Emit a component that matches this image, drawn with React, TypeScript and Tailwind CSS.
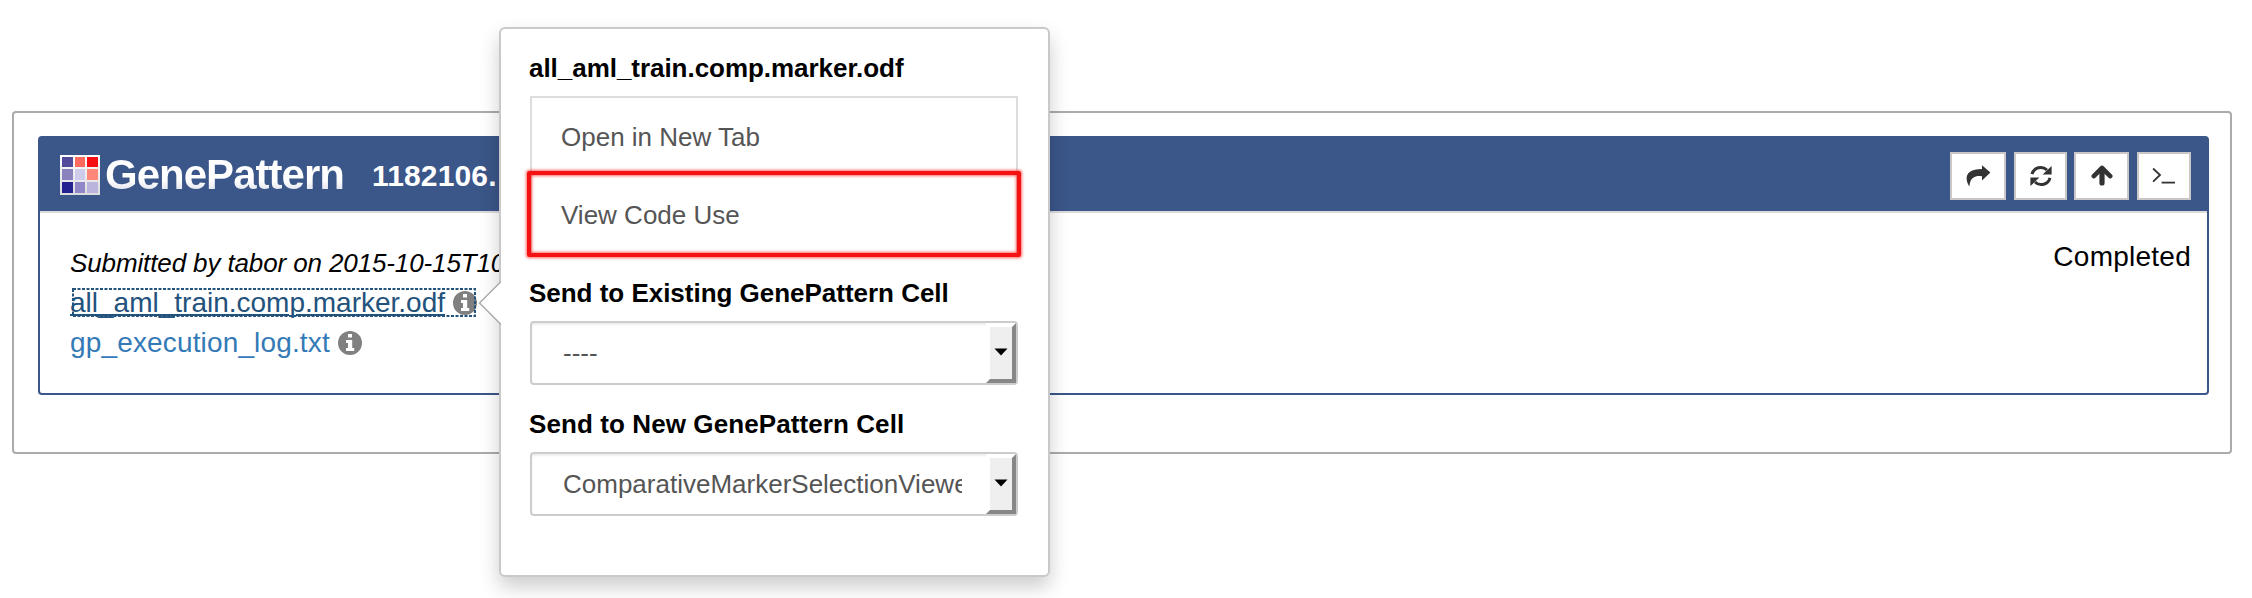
import React from "react";

const logoCells = [
  "bg-[#524a9b]", "bg-[#ff6a5e]", "bg-[#f50f14]",
  "bg-[#8a82bd]", "bg-[#cfcbea]", "bg-[#ff8779]",
  "bg-[#242191]", "bg-[#8f87c8]", "bg-[#bbb5dd]",
];

function Logo() {
  return (
    <div className="flex items-center">
      <div className="grid size-10 grid-cols-3 grid-rows-3 gap-[2px] bg-linear-to-b from-white to-[#dcdcdc] p-[2px]">
        {logoCells.map((c, i) => (
          <span key={i} className={c} />
        ))}
      </div>
      <span className="ml-[5px] bg-linear-to-b from-white from-60% to-[#dcdfe8] to-85% bg-clip-text text-[42px] leading-[52px] font-bold tracking-[-0.98px] text-transparent">
        GenePattern
      </span>
    </div>
  );
}

function IconButton({ className, children }: { className: string; children: React.ReactNode }) {
  return (
    <button className={"flex h-12 items-center justify-center border-2 border-[#cbc6c8] bg-white text-[#333] " + className}>
      {children}
    </button>
  );
}

function ShareIcon() {
  return (
    <svg width="26" height="24" viewBox="0 0 26 24" fill="currentColor">
      <path d="M17 1.2 L25.4 8.6 L17 16.6 V12.2 C10 11.6 5 13.4 4.4 22.6 C-1 14 0.6 5 17 5 Z" />
    </svg>
  );
}

function RefreshIcon() {
  return (
    <svg width="22" height="22" viewBox="0 0 22 22">
      <path d="M2 9.2 A9 9 0 0 1 17 5" fill="none" stroke="currentColor" strokeWidth="3" />
      <path d="M21.6 1 V9.4 H12.6 Z" fill="currentColor" />
      <path d="M20 12.8 A9 9 0 0 1 5 17" fill="none" stroke="currentColor" strokeWidth="3" />
      <path d="M0.4 21 V12.6 H9.4 Z" fill="currentColor" />
    </svg>
  );
}

function ArrowUpIcon() {
  return (
    <svg width="22" height="22" viewBox="0 0 22 22" fill="none" stroke="currentColor" strokeLinecap="round" strokeLinejoin="round">
      <path d="M2.8 11.2 L11 3 L19.2 11.2" strokeWidth="4.6" />
      <path d="M11 4 V18" strokeWidth="5.2" />
    </svg>
  );
}

function TerminalIcon() {
  return (
    <svg width="24" height="18" viewBox="0 0 24 18" fill="none" stroke="currentColor" strokeWidth="1.8">
      <path d="M1.6 2 L8 8 L1.6 14.2" strokeLinecap="round" />
      <path d="M9.6 15.6 H23" />
    </svg>
  );
}

function InfoIcon() {
  return (
    <svg className="ml-2 shrink-0" width="24" height="24" viewBox="0 0 24 24">
      <circle cx="12" cy="12" r="12" fill="#808080" />
      <path d="M10 3 H14 V6.6 H10 Z M8 9 H14.2 V17 H16.2 V20 H8 V17 H10 V12 H8 Z" fill="#fff" />
    </svg>
  );
}

function Heading({ className, children }: { className: string; children: React.ReactNode }) {
  return <h3 className={"h-[38px] text-[26px] leading-[38px] font-bold text-black " + className}>{children}</h3>;
}

function Select({ value }: { value: string }) {
  return (
    <div className="mt-[9px] flex h-16 w-[488px] rounded-[4px] border-2 border-[#ccc] bg-white shadow-[inset_0_2px_2px_rgba(0,0,0,0.07)]">
      <div className="ml-[31px] w-[399px] shrink-0 overflow-hidden text-[26px] leading-[60px] text-[#555]">{value}</div>
      <div className="ml-6 flex h-[60px] w-[30px] shrink-0 items-center justify-center border-4 border-t-white border-r-[#878787] border-b-[#878787] border-l-white bg-[#efefef]">
        <svg className="-mt-[2px]" width="14" height="8" viewBox="0 0 14 8">
          <path d="M0.5 0.5 H13.5 L7 7.5 Z" fill="#000" />
        </svg>
      </div>
    </div>
  );
}

function Popover() {
  return (
    <div className="absolute top-[27px] left-[499px] h-[550px] w-[551px] rounded-[6px] border-2 border-[#c9c9c9] bg-white px-[29px] pt-5 shadow-[0_10px_20px_rgba(0,0,0,0.2)]">
      <svg className="absolute top-[252px] -left-[23px]" width="23" height="44" viewBox="0 0 23 44">
        <path d="M23 0.5 L1.5 22 L23 43.5" fill="#fff" stroke="#a8a8a8" strokeWidth="1.4" />
      </svg>
      <Heading className="-ml-px tracking-[-0.04px]">all_aml_train.comp.marker.odf</Heading>
      <div className="mt-[9px] flex w-[488px] flex-col border-x-2 border-t-2 border-[#ddd] text-[26px] text-[#555]">
        <div className="h-[77px] pl-[29px] leading-[78px]">Open in New Tab</div>
        <div className="relative h-[79px] pl-[29px] leading-[80px]">
          View Code Use
          <span className="absolute -top-[4px] -left-[5px] h-[86px] w-[494px] rounded-[2px] border-4 border-[#f51212] shadow-[0_0_3px_1px_rgba(255,0,0,0.6),inset_0_0_3px_1px_rgba(255,0,0,0.6)]" />
        </div>
      </div>
      <div className="mt-5">
        <Heading className="-ml-px tracking-[-0.02px]">Send to Existing GenePattern Cell</Heading>
        <Select value="----" />
      </div>
      <div className="mt-5">
        <Heading className="-ml-px tracking-[0.09px]">Send to New GenePattern Cell</Heading>
        <Select value="ComparativeMarkerSelectionViewer" />
      </div>
    </div>
  );
}

export default function App() {
  return (
    <div className="relative h-[598px] w-[2252px] overflow-hidden bg-white pt-[111px] pl-3 font-['Liberation_Sans',Arial,sans-serif] whitespace-nowrap text-black">
      <div className="h-[343px] w-[2220px] rounded-[4px] border-2 border-[#ababab] pt-[23px] pl-6">
        <div className="w-[2171px] rounded-[4px] border-2 border-[#3b5689]">
          <div className="flex h-[75px] items-center border-b-2 border-[#dddadb] bg-[#3b5689] pr-4 pl-5">
            <Logo />
            <span className="mt-[2px] ml-[28px] text-[30px] leading-10 font-bold tracking-[0.15px] text-white">1182106.</span>
            <div className="mt-[3px] ml-auto flex">
              <IconButton className="w-14"><ShareIcon /></IconButton>
              <IconButton className="ml-2 w-[53px]"><RefreshIcon /></IconButton>
              <IconButton className="ml-[7px] w-[55px]"><ArrowUpIcon /></IconButton>
              <IconButton className="ml-2 w-[54px]"><TerminalIcon /></IconButton>
            </div>
          </div>
          <div className="flex h-[180px] justify-between pt-[30px] pr-4 pl-[30px]">
            <div className="flex flex-col items-start">
              <div className="h-10 text-[26px] leading-10 tracking-[-0.12px] italic">Submitted by tabor on 2015-10-15T10</div>
              <a className="relative flex h-10 items-center text-[28px] leading-10 text-[#23527c]">
                <span className="underline decoration-2 underline-offset-2">all_aml_train.comp.marker.odf</span>
                <InfoIcon />
                <svg className="absolute top-[5px] left-[2px]" width="404" height="29" viewBox="0 0 404 29">
                  <rect x="1" y="1" width="402" height="27" fill="none" stroke="#23527c" strokeWidth="2" strokeDasharray="3 1.5" />
                </svg>
              </a>
              <a className="flex h-10 items-center text-[28px] leading-10 tracking-[0.15px] text-[#337ab7]">
                <span>gp_execution_log.txt</span>
                <InfoIcon />
              </a>
            </div>
            <div className="-mt-[6px] text-[28px] leading-10 tracking-[0.25px]">Completed</div>
          </div>
        </div>
      </div>
      <Popover />
    </div>
  );
}
